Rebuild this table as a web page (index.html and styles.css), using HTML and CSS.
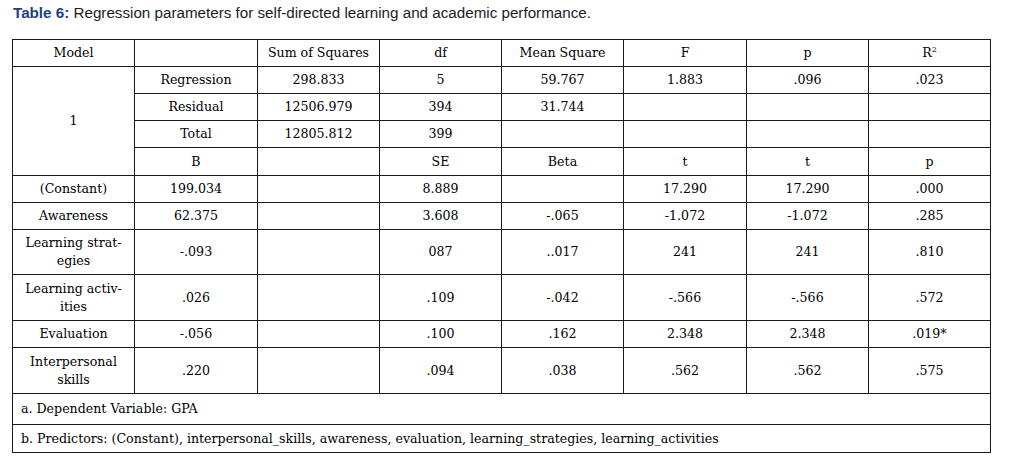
FILE: index.html
```html
<!DOCTYPE html>
<html>
<head>
<meta charset="utf-8">
<link rel="stylesheet" href="styles.css">
</head>
<body>
<div class="page">
  <p class="caption"><span class="label">Table 6:</span> Regression parameters for self-directed learning and academic performance.</p>
  <table class="reg">
    <colgroup>
      <col class="c122"><col class="c123"><col class="c122"><col class="c122"><col class="c122"><col class="c123"><col class="c122"><col class="c122">
    </colgroup>
    <tr class="h1">
      <td>Model</td><td></td><td>Sum of Squares</td><td>df</td><td>Mean Square</td><td>F</td><td>p</td><td>R<sup>2</sup></td>
    </tr>
    <tr class="h1">
      <td rowspan="4">1</td><td>Regression</td><td>298.833</td><td>5</td><td>59.767</td><td>1.883</td><td>.096</td><td>.023</td>
    </tr>
    <tr class="h1">
      <td>Residual</td><td>12506.979</td><td>394</td><td>31.744</td><td></td><td></td><td></td>
    </tr>
    <tr class="h1">
      <td>Total</td><td>12805.812</td><td>399</td><td></td><td></td><td></td><td></td>
    </tr>
    <tr class="h1b">
      <td>B</td><td></td><td>SE</td><td>Beta</td><td>t</td><td>t</td><td>p</td>
    </tr>
    <tr class="h1">
      <td>(Constant)</td><td>199.034</td><td></td><td>8.889</td><td></td><td>17.290</td><td>17.290</td><td>.000</td>
    </tr>
    <tr class="h1">
      <td>Awareness</td><td>62.375</td><td></td><td>3.608</td><td>-.065</td><td>-1.072</td><td>-1.072</td><td>.285</td>
    </tr>
    <tr class="h2">
      <td>Learning strat-<br>egies</td><td>-.093</td><td></td><td>087</td><td>..017</td><td>241</td><td>241</td><td>.810</td>
    </tr>
    <tr class="h2b">
      <td>Learning activ-<br>ities</td><td>.026</td><td></td><td>.109</td><td>-.042</td><td>-.566</td><td>-.566</td><td>.572</td>
    </tr>
    <tr class="h1">
      <td>Evaluation</td><td>-.056</td><td></td><td>.100</td><td>.162</td><td>2.348</td><td>2.348</td><td>.019*</td>
    </tr>
    <tr class="h2b">
      <td>Interpersonal<br>skills</td><td>.220</td><td></td><td>.094</td><td>.038</td><td>.562</td><td>.562</td><td>.575</td>
    </tr>
    <tr class="foot fa">
      <td colspan="8">a. Dependent Variable: GPA</td>
    </tr>
    <tr class="foot fb">
      <td colspan="8">b. Predictors: (Constant), interpersonal_skills, awareness, evaluation, learning_strategies, learning_activities</td>
    </tr>
  </table>
</div>
</body>
</html>
```

FILE: styles.css
```css
html, body {
  margin: 0;
  padding: 0;
  background: #ffffff;
}

.page {
  padding: 4px 0 0 12px;
  width: 979px;
}

.caption {
  margin: 0 0 17px 1px;
  font-family: "Liberation Sans", Arial, sans-serif;
  font-size: 15.2px;
  line-height: 18px;
  color: #1c1c1c;
}

.caption .label {
  font-weight: bold;
  color: #203f86;
}

.reg {
  border-collapse: collapse;
  table-layout: fixed;
  width: 979px;
  font-family: "DejaVu Serif", serif;
  font-size: 12.6px;
  color: #000000;
}

.c122 { width: 122px; }
.c123 { width: 123px; }

.reg td {
  border: 1px solid #1a1a1a;
  text-align: center;
  vertical-align: middle;
  padding: 0 4px;
  line-height: 18px;
}

.reg sup {
  font-size: 8px;
  line-height: 0;
  vertical-align: 5px;
}

.h1 td { height: 26px; }
.h1b td { height: 27px; }
.h2 td { height: 44px; }
.h2b td { height: 45px; }

.foot td {
  text-align: left;
  padding-left: 8px;
}

.fa td { height: 30px; }
.fb td { height: 27px; }
```
